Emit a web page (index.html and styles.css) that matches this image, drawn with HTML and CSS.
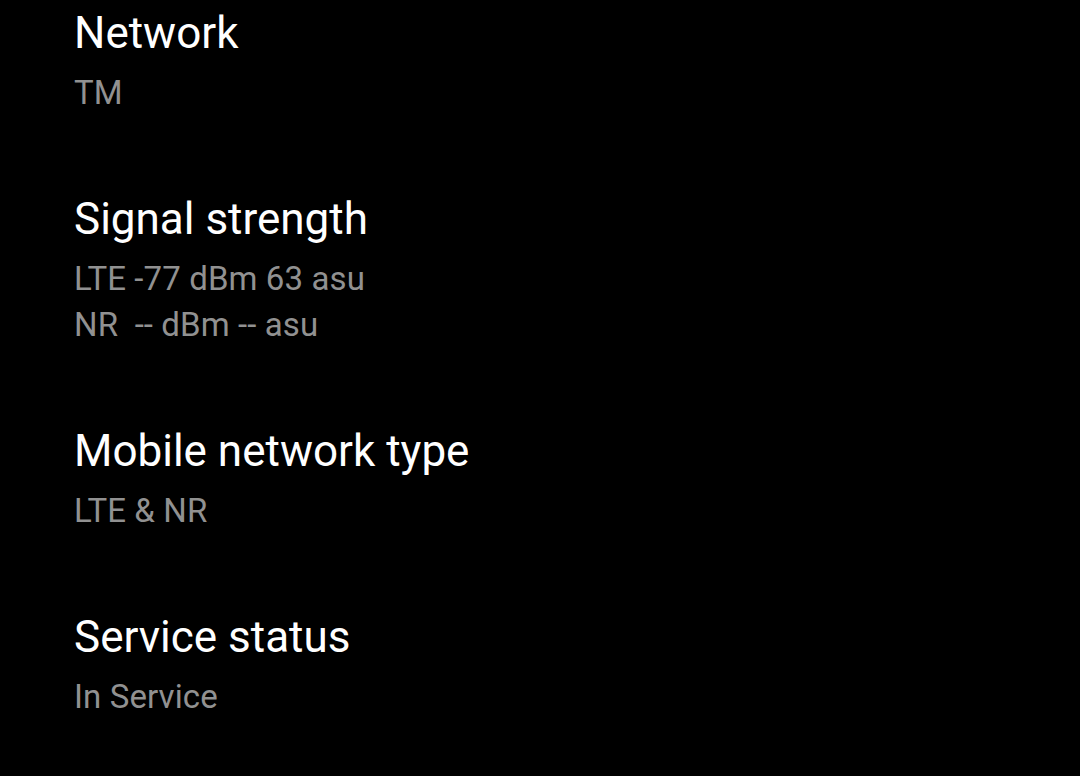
FILE: index.html
```html
<!DOCTYPE html>
<html lang="en">
  <head>
    <meta charset="UTF-8" />
    <meta name="viewport" content="width=device-width, initial-scale=1.0" />
    <title>SIM status</title>
    <link rel="stylesheet" href="styles.css">
  </head>
  <body>
    <ul class="pref-list">
      <li class="pref">
        <div class="pref-title">Network</div>
        <div class="pref-summary">TM</div>
      </li>
      <li class="pref">
        <div class="pref-title">Signal strength</div>
        <div class="pref-summary">LTE -77 dBm 63 asu<br>NR&nbsp; -- dBm -- asu</div>
      </li>
      <li class="pref">
        <div class="pref-title">Mobile network type</div>
        <div class="pref-summary">LTE &amp; NR</div>
      </li>
      <li class="pref">
        <div class="pref-title">Service status</div>
        <div class="pref-summary">In Service</div>
      </li>
    </ul>
  </body>
</html>
```

FILE: styles.css
```css
html,
body {
  background-color: #000;
}
body {
  margin: 0;
  font-family: Roboto, "Noto Sans", sans-serif;
  overflow: hidden;
}
.pref-list {
  list-style-type: none;
  margin: 0;
  padding: 5px 0 0 74px;
}
.pref {
  padding-bottom: 75px;
}
.pref-title {
  color: #fff;
  font-size: 44px;
  line-height: 56px;
}
.pref-summary {
  color: #919191;
  font-size: 33px;
  letter-spacing: 0.1px;
  line-height: 46px;
  margin-top: 9px;
}
```
